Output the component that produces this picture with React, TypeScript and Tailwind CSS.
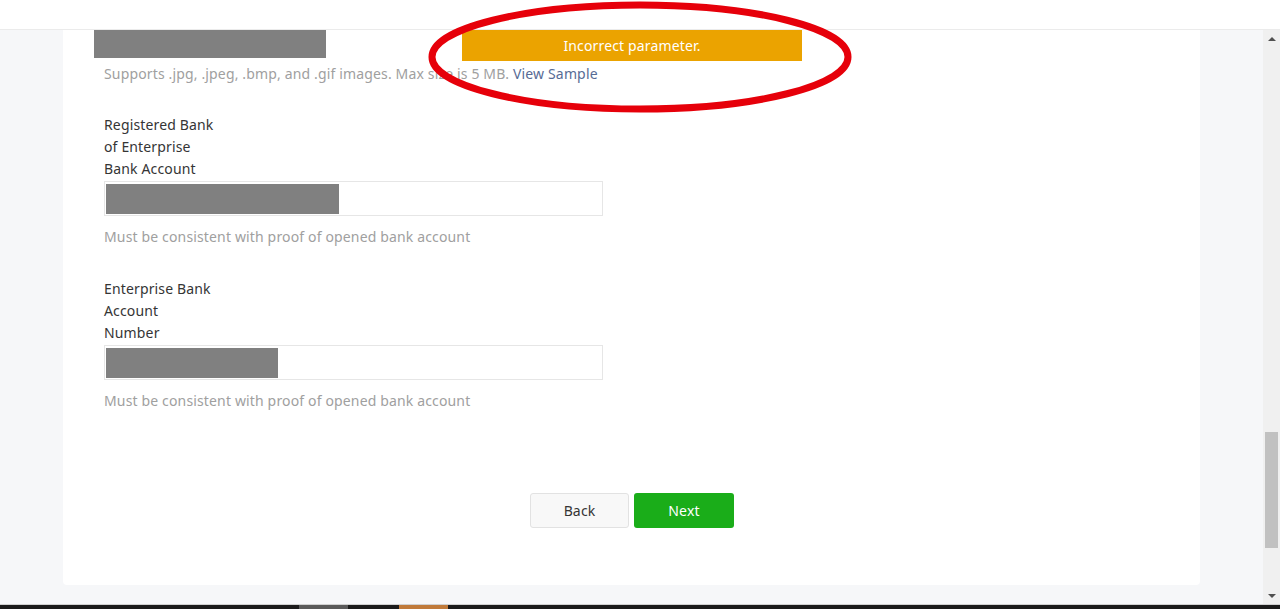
const font = { fontFamily: '"Noto Sans", "Open Sans", Arial, sans-serif' };

function Field({ label, fill, help }: { label: string; fill: number; help: string }) {
  return (
    <div className="flex flex-col">
      <label className="w-[111px] text-[14px] leading-[22px] text-[#353535]">{label}</label>
      <div className="mt-[1px] flex h-[35px] w-[499px] items-center border border-[#e6e6e6] bg-white px-px">
        <div className="h-[30px] bg-[#808080]" style={{ width: fill }} />
      </div>
      <p className="mt-[11px] text-[14px] leading-[20px] text-[#a0a0a0]">{help}</p>
    </div>
  );
}

function Scrollbar() {
  return (
    <div className="flex w-[17px] flex-col items-center bg-[#f0f0f0]">
      <div className="flex h-[17px] w-full items-center justify-center">
        <div className="h-0 w-0 border-x-[4px] border-b-[4px] border-x-transparent border-b-[#505050]" />
      </div>
      <div className="flex-1 w-full px-[2px] pt-[385px]">
        <div className="h-[116px] w-full bg-[#c1c1c1]" />
      </div>
      <div className="flex h-[17px] w-full items-center justify-center">
        <div className="h-0 w-0 border-x-[4px] border-t-[4px] border-x-transparent border-t-[#505050]" />
      </div>
    </div>
  );
}

export default function App() {
  return (
    <div
      className="relative flex h-[609px] w-[1280px] flex-col overflow-hidden bg-white tracking-[0.15px]"
      style={font}
    >
      <header className="h-[30px] shrink-0 border-b border-[#ebebeb] bg-white" />
      <div className="flex h-[574px] shrink-0">
        <main className="flex-1 bg-[#f6f7f9] pl-[63px] pr-[63px]">
          <section className="relative flex h-[555px] w-[1137px] flex-col rounded-b-[4px] bg-white pl-[41px]">
            <div className="-ml-[10px] h-[28px] w-[232px] bg-[#808080]" />
            <p className="mt-[6px] text-[14px] leading-[20px] text-[#a0a0a0]">
              Supports .jpg, .jpeg, .bmp, and .gif images. Max size is 5 MB.{" "}
              <a className="text-[#576b95]">View Sample</a>
            </p>
            <div className="mt-[30px] flex flex-col gap-[31px]">
              <Field
                label="Registered Bank of Enterprise Bank Account"
                fill={233}
                help="Must be consistent with proof of opened bank account"
              />
              <Field
                label="Enterprise Bank Account Number"
                fill={172}
                help="Must be consistent with proof of opened bank account"
              />
            </div>
            <div className="-ml-[41px] mt-[82px] flex justify-center gap-[5px] pl-px">
              <button className="h-[35px] w-[99px] rounded-[3px] border border-[#e2e2e2] bg-[#f8f8f8] text-[14px] text-[#353535]">
                Back
              </button>
              <button className="h-[35px] w-[100px] rounded-[3px] bg-[#1aad19] text-[14px] text-white">
                Next
              </button>
            </div>
            <div className="absolute left-[399px] top-0 flex h-[31px] w-[340px] items-center justify-center bg-[#eba300] text-[14px] text-white">
              Incorrect parameter.
            </div>
          </section>
        </main>
        <Scrollbar />
      </div>
      <div className="h-px shrink-0 bg-[#d0d0d0]" />
      <div className="flex h-[4px] shrink-0 bg-[#1b1b1b]">
        <div className="ml-[299px] w-[49px] bg-[#5a5a5a]" />
        <div className="ml-[51px] w-[49px] bg-[#c07a3a]" />
      </div>
      <svg className="pointer-events-none absolute left-0 top-0" width="1280" height="609">
        <ellipse cx="640" cy="57" rx="208" ry="52" fill="none" stroke="#e6000a" strokeWidth="7" />
      </svg>
    </div>
  );
}
